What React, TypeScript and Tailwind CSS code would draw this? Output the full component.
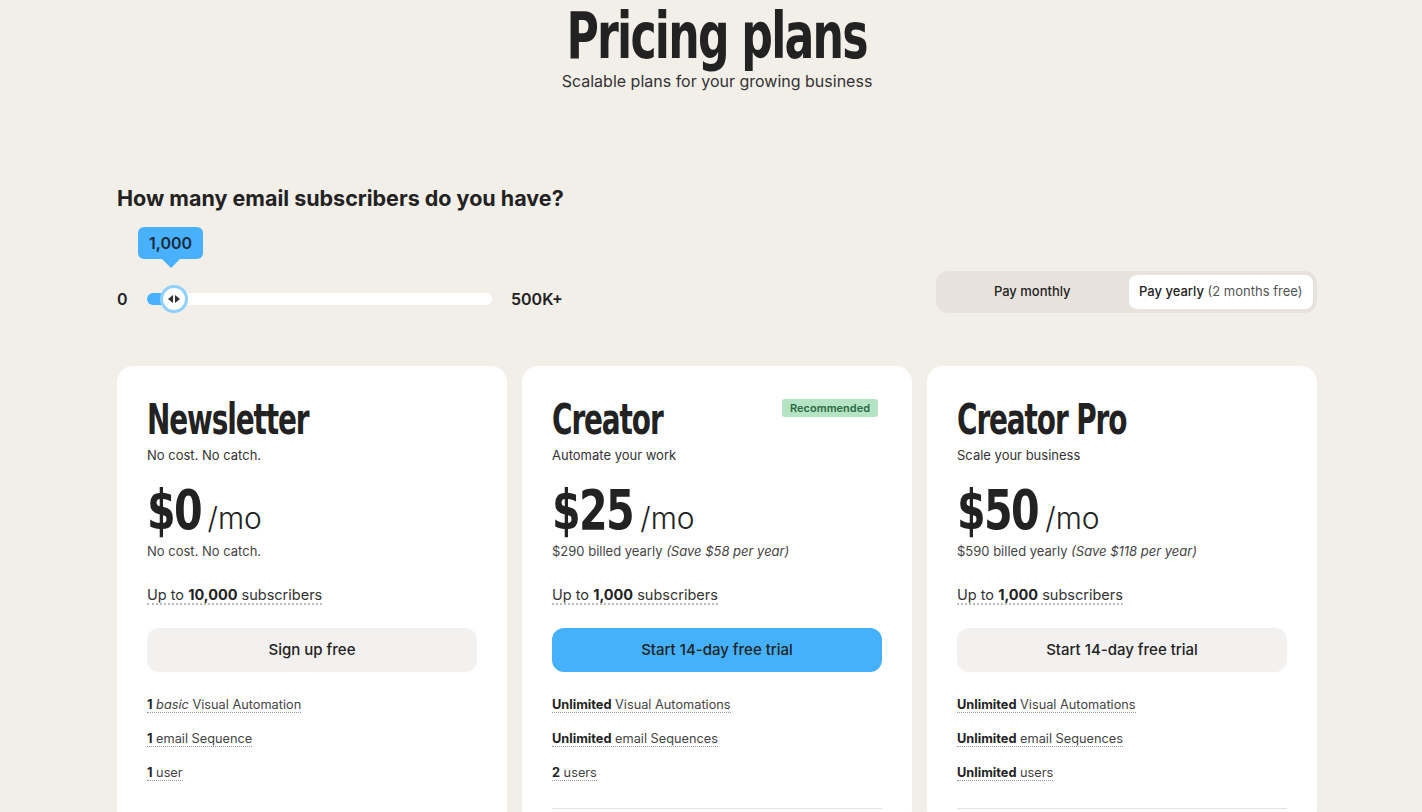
import { useState } from "react";

const plans = [
  {
    name: "Newsletter",
    tagline: "No cost. No catch.",
    price: "$0",
    priceFix: "mr-[-19px]",
    billed: <>No cost. No catch.</>,
    subs: "10,000",
    cta: "Sign up free",
    primary: false,
    recommended: false,
    divider: false,
    features: [
      <><b>1</b> <i>basic</i> Visual Automation</>,
      <><b>1</b> email Sequence</>,
      <><b>1</b> user</>,
    ],
  },
  {
    name: "Creator",
    tagline: "Automate your work",
    price: "$25",
    priceFix: "mr-[-28px]",
    billed: <>$290 billed yearly <i>(Save $58 per year)</i></>,
    subs: "1,000",
    cta: "Start 14-day free trial",
    primary: true,
    recommended: true,
    divider: true,
    features: [
      <><b>Unlimited</b> Visual Automations</>,
      <><b>Unlimited</b> email Sequences</>,
      <><b>2</b> users</>,
    ],
  },
  {
    name: "Creator Pro",
    tagline: "Scale your business",
    price: "$50",
    priceFix: "mr-[-28px]",
    billed: <>$590 billed yearly <i>(Save $118 per year)</i></>,
    subs: "1,000",
    cta: "Start 14-day free trial",
    primary: false,
    recommended: false,
    divider: true,
    features: [
      <><b>Unlimited</b> Visual Automations</>,
      <><b>Unlimited</b> email Sequences</>,
      <><b>Unlimited</b> users</>,
    ],
  },
];

// no condensed face installed, so squeeze the bold sans horizontally
const display = "font-['DejaVu_Sans',sans-serif] font-bold inline-block";

const App = () => {
  const [yearly, setYearly] = useState(true);

  return (
    <div className="min-h-screen bg-[#f2efe9] text-[#222] font-['Inter','Liberation_Sans',sans-serif] overflow-hidden">
      <div className="w-[1200px] ml-[117px]">
        <div className="text-center">
          <h1 className={`${display} text-[64px] leading-[72px] tracking-[-0.04em] scale-x-[0.69] origin-center`}>
            Pricing plans
          </h1>
          <p className="mt-[-3px] text-[16px] leading-[24px] text-[#333]">
            Scalable plans for your growing business
          </p>
        </div>

        <h2 className="mt-[91px] text-[21.5px] leading-[28px] font-bold">
          How many email subscribers do you have?
        </h2>

        <div className="mt-[15px] flex items-end justify-between">
          <div className="flex items-center h-[86px] pt-[58px]">
            <span className="text-[16px] font-semibold w-[30px]">0</span>
            <div className="relative w-[345px] h-[12px] rounded-full bg-white">
              <div className="absolute left-0 top-0 h-full w-[27px] rounded-l-full bg-[#47b1ff]" />
              <div className="absolute left-[-9px] top-[-66px] flex flex-col items-center">
                <div className="bg-[#47b1ff] rounded-md px-[11px] h-[32px] flex items-center text-[16px] font-semibold text-[#1c2a38]">
                  1,000
                </div>
                <div className="w-0 h-0 border-l-[9px] border-r-[9px] border-t-[9px] border-l-transparent border-r-transparent border-t-[#47b1ff]" />
              </div>
              <div className="absolute left-[13px] top-[-8px] w-[28px] h-[28px] rounded-full bg-white border-[3px] border-[#8fd0ff] flex items-center justify-center gap-[2px]">
                <span className="w-0 h-0 border-t-[4px] border-b-[4px] border-r-[5px] border-t-transparent border-b-transparent border-r-[#333]" />
                <span className="w-0 h-0 border-t-[4px] border-b-[4px] border-l-[5px] border-t-transparent border-b-transparent border-l-[#333]" />
              </div>
            </div>
            <span className="ml-[19px] text-[16px] font-semibold">500K+</span>
          </div>

          <div className="w-[381px] h-[42px] p-[4px] rounded-xl bg-[#e7e3dc] flex gap-[4px] text-[13px]">
            <button
              onClick={() => setYearly(false)}
              className={`flex-1 rounded-lg font-medium ${!yearly ? "bg-white" : ""}`}
            >
              Pay monthly
            </button>
            <button
              onClick={() => setYearly(true)}
              className={`flex-1 rounded-lg ${yearly ? "bg-white" : ""}`}
            >
              <span className="font-medium">Pay yearly</span>{" "}
              <span className="text-[#555]">(2 months free)</span>
            </button>
          </div>
        </div>

        <div className="mt-[53px] grid grid-cols-3 gap-[15px]">
          {plans.map((plan) => (
            <div key={plan.name} className="relative bg-white rounded-2xl px-[30px] pt-[33px] h-[460px]">
              {plan.recommended && (
                <span className="absolute right-[34px] top-[33px] bg-[#b4e4c3] text-[#2c6a45] text-[11px] font-semibold leading-[18px] px-[8px] rounded-[3px]">
                  Recommended
                </span>
              )}
              <div>
                <h3 className={`${display} text-[42px] leading-[42px] tracking-[-0.04em] scale-x-[0.665] origin-left whitespace-nowrap`}>
                  {plan.name}
                </h3>
              </div>
              <p className="mt-[4px] text-[13px] leading-[20px] text-[#333]">{plan.tagline}</p>
              <div className="mt-[17px] flex items-baseline">
                <span className={`${display} ${plan.priceFix} text-[56px] leading-[56px] tracking-[-0.04em] scale-x-[0.735] origin-left`}>
                  {plan.price}
                </span>
                <span className="ml-[6px] text-[30px] font-light text-[#222]">/mo</span>
              </div>
              <p className="text-[13px] leading-[20px] text-[#444]">{plan.billed}</p>
              <div className="mt-[21px]">
                <span className="text-[14.5px] leading-[22px] text-[#333] border-b-2 border-dotted border-[#bbb]">
                  Up to <b className="text-[#222]">{plan.subs}</b> subscribers
                </span>
              </div>
              <button
                className={`mt-[22px] w-full h-[44px] rounded-xl text-[15px] font-medium text-[#222] ${
                  plan.primary ? "bg-[#45b1fc]" : "bg-[#f2f1ef]"
                }`}
              >
                {plan.cta}
              </button>
              <ul className="mt-[23px] flex flex-col gap-[14px]">
                {plan.features.map((f, i) => (
                  <li key={i} className="text-[12.75px] leading-[20px] text-[#444]">
                    <span className="border-b border-dotted border-[#999] [&_b]:text-[#222]">{f}</span>
                  </li>
                ))}
              </ul>
              {plan.divider && <div className="mt-[25px] h-px bg-[#e2e2e2]" />}
            </div>
          ))}
        </div>
      </div>
    </div>
  );
};

export default App;
